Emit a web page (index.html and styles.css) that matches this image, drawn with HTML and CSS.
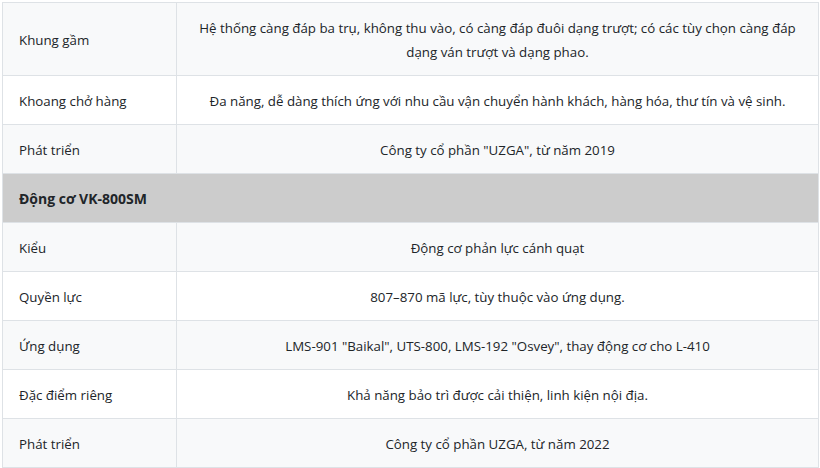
FILE: index.html
```html
<!DOCTYPE html>
<html lang="vi">
<head>
<meta charset="utf-8">
<link rel="stylesheet" href="styles.css">
</head>
<body>
<div class="wrap">
<table class="spec">
<tbody>
<tr><td class="key">Khung gầm</td><td class="val">Hệ thống càng đáp ba trụ, không thu vào, có càng đáp đuôi dạng trượt; có các tùy chọn càng đáp dạng ván trượt và dạng phao.</td></tr>
<tr><td class="key">Khoang chở hàng</td><td class="val">Đa năng, dễ dàng thích ứng với nhu cầu vận chuyển hành khách, hàng hóa, thư tín và vệ sinh.</td></tr>
<tr><td class="key">Phát triển</td><td class="val">Công ty cổ phần "UZGA", từ năm 2019</td></tr>
<tr class="group"><th colspan="2">Động cơ VK-800SM</th></tr>
<tr><td class="key">Kiểu</td><td class="val">Động cơ phản lực cánh quạt</td></tr>
<tr><td class="key">Quyền lực</td><td class="val">807–870 mã lực, tùy thuộc vào ứng dụng.</td></tr>
<tr><td class="key">Ứng dụng</td><td class="val">LMS-901 "Baikal", UTS-800, LMS-192 "Osvey", thay động cơ cho L-410</td></tr>
<tr><td class="key">Đặc điểm riêng</td><td class="val">Khả năng bảo trì được cải thiện, linh kiện nội địa.</td></tr>
<tr><td class="key">Phát triển</td><td class="val">Công ty cổ phần UZGA, từ năm 2022</td></tr>
</tbody>
</table>
</div>
</body>
</html>
```
FILE: styles.css
```css
html, body {
  margin: 0;
  padding: 0;
  background: #ffffff;
}
.wrap {
  padding: 2px 1px 0 2px;
}
.spec {
  width: 100%;
  border-collapse: collapse;
  font-family: "Open Sans", "Noto Sans", sans-serif;
  font-size: 13.3px;
  line-height: 24px;
  color: #212529;
}
.spec td, .spec th {
  border: 1px solid #dee2e6;
  padding: 13px 16px 11px;
  vertical-align: middle;
}
.spec tr:nth-child(odd) td {
  background: #f8f9fa;
}
.spec .key {
  width: 141px;
  text-align: left;
}
.spec .val {
  text-align: center;
}
.spec .group th {
  background: #cccccc;
  text-align: left;
  font-weight: 700;
  font-size: 14px;
}
```
